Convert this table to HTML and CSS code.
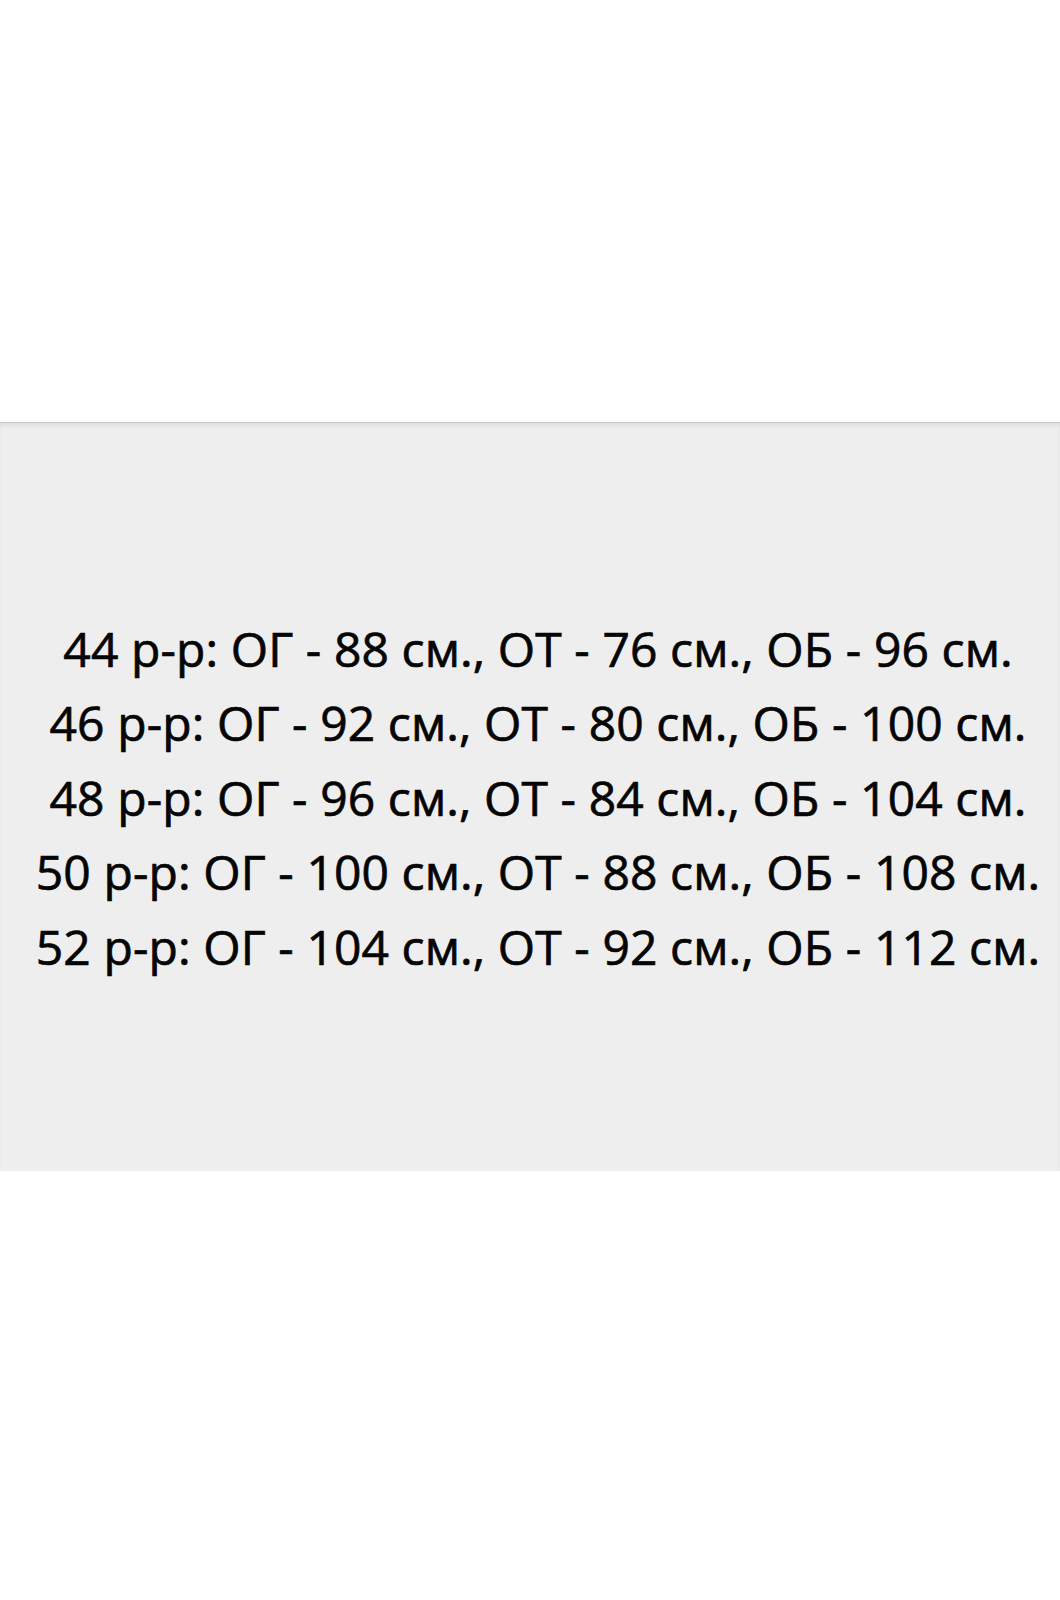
FILE: index.html
```html
<!DOCTYPE html>
<html lang="ru">
<head>
<meta charset="utf-8">
<link rel="stylesheet" href="styles.css">
</head>
<body>
<div class="page">
  <div class="top"></div>
  <section class="panel">
    <div class="sizes">
      <p class="row">44 р-р: ОГ - 88 см., ОТ - 76 см., ОБ - 96 см.</p>
      <p class="row">46 р-р: ОГ - 92 см., ОТ - 80 см., ОБ - 100 см.</p>
      <p class="row">48 р-р: ОГ - 96 см., ОТ - 84 см., ОБ - 104 см.</p>
      <p class="row">50 р-р: ОГ - 100 см., ОТ - 88 см., ОБ - 108 см.</p>
      <p class="row">52 р-р: ОГ - 104 см., ОТ - 92 см., ОБ - 112 см.</p>
    </div>
  </section>
</div>
</body>
</html>
```
FILE: styles.css
```css
html, body {
  margin: 0;
  padding: 0;
  background: #ffffff;
}
.page {
  width: 1060px;
  height: 1600px;
  display: flex;
  flex-direction: column;
}
.top {
  height: 422px;
  flex: none;
}
.panel {
  height: 749px;
  flex: none;
  background: #eeeeee;
  border-top: 1px solid #c8c8c8;
  box-shadow: inset 0 4px 5px -2px rgba(0,0,0,0.08);
  box-sizing: border-box;
  display: flex;
  align-items: center;
  justify-content: center;
}
.sizes {
  display: flex;
  flex-direction: column;
  align-items: center;
  padding-top: 2px;
  padding-left: 16px;
}
.row {
  margin: 0;
  font-family: "Open Sans", "Liberation Sans", sans-serif;
  font-size: 48px;
  font-weight: 400;
  line-height: 74.6px;
  color: #050505;
  -webkit-text-stroke: 0.7px #050505;
  letter-spacing: 0.1px;
  white-space: nowrap;
}
```
